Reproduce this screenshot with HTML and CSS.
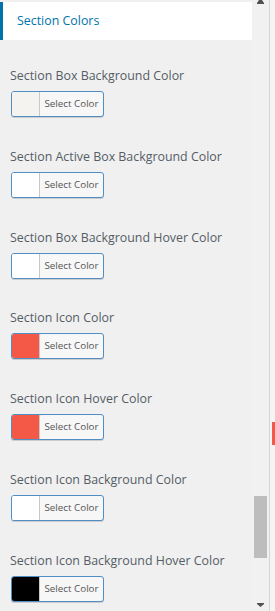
FILE: index.html
```html
<!DOCTYPE html>
<html lang="en">
<head>
    <meta charset="UTF-8">
    <title>Section Colors</title>
    <link rel="stylesheet" href="styles.css">
</head>
<body>
<div class="frame">
    <div class="panel">
        <div class="section-head">Section Colors</div>

        <div class="control">
            <div class="label">Section Box Background Color</div>
            <button class="picker"><span class="swatch" style="background:#f5f3ef"></span><span class="pick-text">Select Color</span></button>
        </div>
        <div class="control">
            <div class="label">Section Active Box Background Color</div>
            <button class="picker"><span class="swatch" style="background:#ffffff"></span><span class="pick-text">Select Color</span></button>
        </div>
        <div class="control">
            <div class="label">Section Box Background Hover Color</div>
            <button class="picker"><span class="swatch" style="background:#ffffff"></span><span class="pick-text">Select Color</span></button>
        </div>
        <div class="control">
            <div class="label">Section Icon Color</div>
            <button class="picker"><span class="swatch" style="background:#f45847"></span><span class="pick-text">Select Color</span></button>
        </div>
        <div class="control">
            <div class="label">Section Icon Hover Color</div>
            <button class="picker"><span class="swatch" style="background:#f45847"></span><span class="pick-text">Select Color</span></button>
        </div>
        <div class="control">
            <div class="label">Section Icon Background Color</div>
            <button class="picker"><span class="swatch" style="background:#ffffff"></span><span class="pick-text">Select Color</span></button>
        </div>
        <div class="control">
            <div class="label">Section Icon Background Hover Color</div>
            <button class="picker"><span class="swatch" style="background:#000000"></span><span class="pick-text">Select Color</span></button>
        </div>
    </div>

    <div class="scrollbar">
        <svg class="arrow" width="7" height="4" viewBox="0 0 7 4"><path d="M2 0h3l2 3H0z M0 3h7v1H0z" fill="#505050"/></svg>
        <div class="track-top"></div>
        <div class="thumb"></div>
        <div class="track-bottom"></div>
        <svg class="arrow" width="7" height="4" viewBox="0 0 7 4"><path d="M0 0h7v1H0z M0 1h7L3.5 4z" fill="#505050"/></svg>
    </div>

    <div class="preview">
        <div class="preview-mark"></div>
    </div>
</div>
</body>
</html>
```

FILE: styles.css
```css
html, body {
    margin: 0;
    padding: 0;
}
body {
    font-family: "Open Sans", "Noto Sans", sans-serif;
    background-color: #f0f0f0;
}
.frame {
    display: flex;
    width: 275px;
    height: 611px;
    overflow: hidden;
}
.panel {
    width: 252px;
    background-color: #f0f0f0;
}
.section-head {
    margin-top: 2px;
    height: 38px;
    box-sizing: border-box;
    background-color: #ffffff;
    border-left: 3px solid #0073aa;
    padding-left: 14px;
    line-height: 38px;
    font-size: 12.4px;
    color: #0073aa;
}
.control {
    padding-left: 10px;
    margin-top: 27px;
}
.control + .control {
    margin-top: 30.8px;
}
.label {
    font-size: 12.4px;
    line-height: 18px;
    color: #555d66;
    white-space: nowrap;
}
.picker {
    display: flex;
    align-items: stretch;
    margin-top: 6px;
    margin-left: 1px;
    padding: 0;
    width: 93px;
    height: 26px;
    border: 1px solid #4f8fc6;
    border-radius: 3px;
    background-color: #f7f7f7;
    box-shadow: 0 1px 0 #ccc;
    overflow: hidden;
    font-family: inherit;
}
.swatch {
    width: 27px;
    border-right: 1px solid #c8c8c8;
}
.pick-text {
    flex: 1;
    font-size: 9.8px;
    line-height: 24px;
    color: #555;
    text-align: center;
}
.scrollbar {
    width: 17px;
    display: flex;
    flex-direction: column;
    align-items: center;
    background-color: #f1f1f1;
    border-right: 1px solid #d6d6d6;
}
.arrow {
    flex: none;
}
.track-top {
    height: 492px;
}
.thumb {
    width: 13px;
    height: 62px;
    background-color: #bdbdbd;
}
.track-bottom {
    flex: 1;
}
.scrollbar .arrow:last-child {
    margin-bottom: 4px;
}
.preview {
    flex: 1;
    background-color: #f6f4f0;
}
.preview-mark {
    margin-top: 422px;
    margin-left: 2px;
    height: 23px;
    background-color: #f45847;
}
```
